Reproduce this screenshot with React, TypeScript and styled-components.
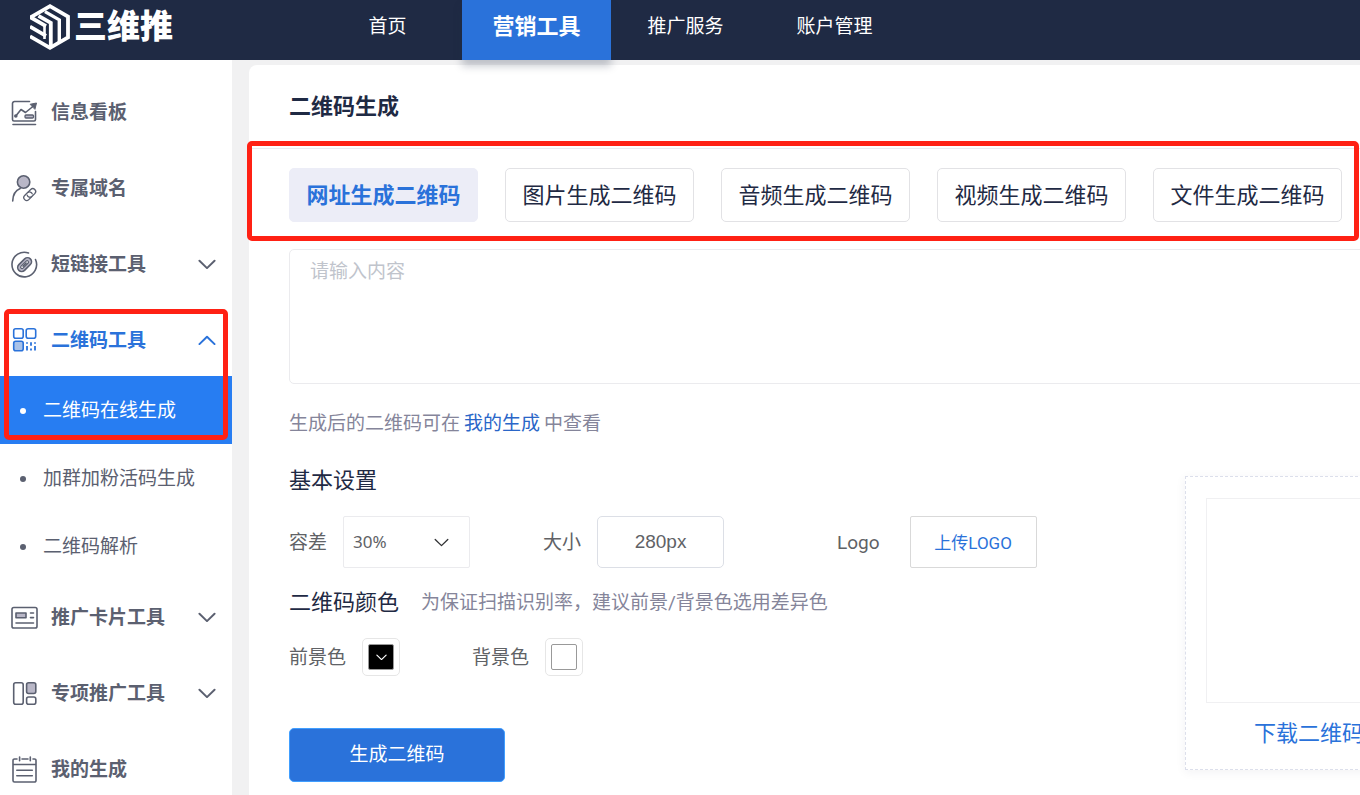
import React, { useState } from "react";
import styled, { createGlobalStyle, css } from "styled-components";

const GlobalStyle = createGlobalStyle`
  *, *::before, *::after { box-sizing: border-box; }
  html { scrollbar-width: none; overflow-x: hidden; }
  body {
    margin: 0;
    background: #f1f1f2;
    color: #1f2a44;
    font-family: Roboto, "Noto Sans CJK SC", sans-serif;
    font-size: 19px;
    line-height: 24px;
  }
  button, input, select, textarea { font: inherit; color: inherit; margin: 0; }
  button { cursor: pointer; }
  a { text-decoration: none; }
`;

/* ---------- header ---------- */

const Header = styled.header`
  display: flex;
  height: 60px;
  padding-left: 30px;
  background: #1f2a44;
  color: #fff;
`;

const Brand = styled.a`
  display: flex;
  align-items: center;
  gap: 4px;
  width: 283px;
  height: 54px;
  color: #fff;
  font-size: 33px;
  font-weight: 900;
  line-height: 40px;
`;

const Nav = styled.nav`
  display: flex;
`;

const NavLink = styled.a<{ $active?: boolean }>`
  width: 149px;
  height: 60px;
  line-height: 54px;
  text-align: center;
  color: #fff;
  ${(p) =>
    p.$active &&
    css`
      position: relative;
      background: #2a72da;
      font-size: 22px;
      font-weight: 700;
      box-shadow: 0 6px 8px rgba(31, 42, 68, 0.25);
    `}
`;

/* ---------- sidebar ---------- */

const Layout = styled.div`
  display: flex;
  align-items: stretch;
`;

const Sidebar = styled.aside`
  flex: none;
  width: 232px;
  padding-top: 14px;
  background: #fff;
`;

const Group = styled.div`
  position: relative;
`;

const MenuButton = styled.button<{ $active?: boolean }>`
  display: flex;
  align-items: center;
  gap: 13px;
  width: 100%;
  height: 76px;
  padding: 0 16px 0 11px;
  border: 0;
  background: none;
  text-align: left;
  font-weight: 700;
  color: ${(p) => (p.$active ? "#2a72da" : "#5b6070")};
`;

const MenuText = styled.span`
  flex: 1;
  padding-top: 2px;
`;

const SubMenu = styled.ul`
  margin: -2px 0 -1px;
  padding: 0;
  list-style: none;
`;

const SubLink = styled.a<{ $active?: boolean }>`
  display: flex;
  align-items: center;
  gap: 17px;
  height: 68px;
  padding: 2px 0 0 20px;
  color: ${(p) => (p.$active ? "#fff" : "#5b6070")};
  background: ${(p) => (p.$active ? "#277df2" : "transparent")};

  &::before {
    content: "";
    width: 6px;
    height: 6px;
    border-radius: 50%;
    background: currentColor;
  }
`;

const Highlight = styled.div`
  position: absolute;
  border: 5px solid #ff2114;
  border-radius: 5px;
  pointer-events: none;
`;

const MenuHighlight = styled(Highlight)`
  top: 7px;
  left: 4px;
  right: 4px;
  height: 131px;
`;

const TabsHighlight = styled(Highlight)`
  top: -27px;
  right: -17px;
  bottom: -19px;
  left: -42px;
`;

/* ---------- content ---------- */

const Card = styled.main`
  flex: 1 0 auto;
  min-width: 1224px;
  margin: 5px 0 0 17px;
  padding-bottom: 40px;
  border-radius: 8px 0 0 0;
  background: #fff;
`;

const CardHeader = styled.div`
  padding: 27px 40px 26px;
  border-bottom: 1px solid #ebebee;
`;

const CardTitle = styled.h1`
  margin: 0;
  font-size: 22px;
  line-height: 30px;
  font-weight: 700;
`;

const CardBody = styled.div`
  padding: 19px 40px 0;
`;

const Tabs = styled.div`
  position: relative;
  display: flex;
  gap: 27px;
  width: fit-content;
`;

const Tab = styled.button<{ $active?: boolean }>`
  width: 189px;
  height: 54px;
  padding: 2px 0 0;
  border: 1px solid ${(p) => (p.$active ? "#ecedf7" : "#e2e2e5")};
  border-radius: 5px;
  background: ${(p) => (p.$active ? "#ecedf7" : "#fff")};
  color: ${(p) => (p.$active ? "#2a72da" : "#1f2a44")};
  font-size: 22px;
  font-weight: ${(p) => (p.$active ? 700 : 400)};
`;

const Content = styled.textarea`
  display: block;
  width: 100%;
  height: 135px;
  margin-top: 27px;
  padding: 10px 20px;
  border: 1px solid #ebebee;
  border-radius: 5px;
  resize: none;
  background: #fff;
  &::placeholder {
    color: #c0c4cc;
    opacity: 1;
  }
`;

const Hint = styled.p`
  margin: 28px 0 30px;
  color: #85859a;
  a {
    margin: 0 4px;
    color: #2a66c8;
  }
`;

const Columns = styled.div`
  display: flex;
  justify-content: space-between;
  align-items: flex-start;
`;

const SectionTitle = styled.h2`
  margin: 0;
  font-size: 22px;
  line-height: 30px;
  font-weight: 400;
`;

const ColorHeading = styled.div`
  display: flex;
  align-items: center;
  gap: 22px;
  margin-top: 20px;
  color: #85859a;
  h2 { color: #1f2a44; }
`;

const Fields = styled.div<{ $gap: number }>`
  display: flex;
  gap: ${(p) => p.$gap}px;
  margin-top: 20px;
`;

const Field = styled.div<{ $gap?: number }>`
  display: flex;
  align-items: center;
  gap: ${(p) => p.$gap ?? 16}px;
  color: #606266;
  label { padding-top: 2px; }
`;

const UploadField = styled(Field)`
  margin-left: 40px;
`;

const SelectBox = styled.div`
  position: relative;
  display: flex;
  align-items: center;
  svg {
    position: absolute;
    right: 21px;
    color: #303133;
    pointer-events: none;
  }
`;

const Select = styled.select`
  appearance: none;
  width: 127px;
  height: 52px;
  padding: 0 9px;
  border: 1px solid #ebebee;
  border-radius: 2px;
  background: #fff;
  font-family: "Noto Sans", sans-serif;
  font-size: 17px;
`;

const SizeInput = styled.input`
  width: 127px;
  height: 52px;
  padding: 0;
  border: 1px solid #dcdfe6;
  border-radius: 5px;
  background: #fff;
  font-family: "Liberation Sans", sans-serif;
  text-align: center;
`;

const UploadButton = styled.button`
  width: 127px;
  height: 52px;
  padding: 2px 0 0;
  border: 1px solid #d9d9d9;
  border-radius: 2px;
  background: #fff;
  color: #2a72da;
  font-size: 17px;
`;

const Swatch = styled.button`
  display: grid;
  place-items: center;
  width: 38px;
  height: 38px;
  padding: 0;
  border: 1px solid #e6e6e6;
  border-radius: 5px;
  background: #fff;
`;

const SwatchColor = styled.span<{ $color: string }>`
  display: grid;
  place-items: center;
  width: 26px;
  height: 26px;
  border: 1px solid #999;
  border-radius: 2px;
  background: ${(p) => p.$color};
  color: #fff;
`;

const Submit = styled.button`
  width: 216px;
  height: 54px;
  margin-top: 52px;
  padding: 0;
  border: 1px solid #409eff;
  border-radius: 5px;
  background: #2a72da;
  color: #fff;
`;

const Preview = styled.div`
  width: 248px;
  margin-top: 10px;
  padding: 21px 20px 20px;
  border: 1px dashed #dcdfeb;
  box-shadow: 0 2px 10px rgba(31, 42, 68, 0.06);
  text-align: center;
`;

const PreviewFrame = styled.div`
  height: 205px;
  margin-bottom: 16px;
  border: 1px solid #f0f0f2;
`;

const Download = styled.a`
  color: #2a72da;
  font-size: 22px;
  line-height: 30px;
`;

/* ---------- drawings ---------- */

const LogoMark = () => (
  <svg width="40" height="46" viewBox="0 0 40 46" fill="none" stroke="#fff" strokeWidth="3.8" aria-hidden="true">
    <path d="M0 13.700 20 2.200 38 12.600V33.400L20 43.800 0 32.300" />
    <path d="M0 13 16 22.200M0 22.600 16 31.800" />
    <path d="M8.500 11.800 20.800 18.900V43" />
    <path d="M15 7.600 29.300 15.900V38" strokeWidth="3.400" />
    <path d="M14.500 22V35" strokeWidth="2.600" />
  </svg>
);

const Chevron = ({ up, width = 18, stroke = 2 }: { up?: boolean; width?: number; stroke?: number }) => (
  <svg
    width={width}
    height={width * 0.6}
    viewBox="0 0 18 11"
    fill="none"
    stroke="currentColor"
    strokeWidth={stroke}
    strokeLinecap="round"
    strokeLinejoin="round"
    aria-hidden="true"
  >
    <path d={up ? "M1.3 9.3 9 1.8l7.7 7.5" : "M1.3 1.8 9 9.3l7.7-7.5"} />
  </svg>
);

const SvgIcon = styled.svg.attrs({ width: 27, height: 27, viewBox: "0 0 27 27" })`
  flex: none;
  fill: none;
  stroke: currentColor;
  stroke-width: 1.6;
  stroke-linecap: round;
  stroke-linejoin: round;
`;

const tint = "#b9b7c7";

const icons: Record<string, React.ReactNode> = {
  board: (
    <SvgIcon>
      <path d="M18.5 2.500H3.500a2 2 0 0 0-2 2V20.500a1.500 1.500 0 0 0 1.500 1.500h20a1.500 1.500 0 0 0 1.500-1.500v-8" />
      <path d="m4.800 17 5.200-6.500 4.500 3L22.500 7" />
      <circle cx="4.800" cy="17" r="1" fill="currentColor" />
      <path d="m19.500 5.200 6-1.200-1.500 6Z" fill="currentColor" strokeWidth="1" />
      <rect x="14" y="16" width="8.500" height="3" rx="1" fill={tint} strokeWidth="1.300" />
      <path d="M2 25.500h22.500" />
    </SvgIcon>
  ),
  domain: (
    <SvgIcon>
      <circle cx="12.600" cy="7" r="6.200" fill={tint} />
      <path d="M1.700 26c.2-6 2.300-10.500 7.500-12.500" />
      <g transform="rotate(-45 18.700 19.600)" strokeWidth="1.300">
        <path d="M18.500 22.500h-4a2.900 2.900 0 0 1 0-5.800h4.200a2.900 2.900 0 0 1 2.300 4.200" />
        <path d="M19 16.700h4a2.900 2.900 0 0 1 0 5.800h-4.200a2.900 2.900 0 0 1-2.300-4.200" />
      </g>
    </SvgIcon>
  ),
  link: (
    <SvgIcon>
      <path d="M17.500 2A12.300 12.300 0 1 0 24.500 8.500" />
      <g transform="rotate(-45 13.600 13.600)">
        <rect x="5.500" y="9.600" width="16.200" height="8" rx="4" fill={tint} />
        <rect x="8.600" y="12.200" width="10" height="2.800" rx="1.400" fill="#fff" strokeWidth="1.200" />
        <path d="M11.500 13.600h4.200" />
      </g>
    </SvgIcon>
  ),
  qr: (
    <SvgIcon>
      <rect x="2.700" y="1.800" width="9.500" height="9.500" rx="2" />
      <rect x="15.200" y="1.800" width="9.500" height="9.500" rx="2" />
      <rect x="2.700" y="14.300" width="9.500" height="9.500" rx="2" fill="#a9c2e8" />
      <path
        d="M16 15.300v1.400M16 19v4.400M20 15.300v3.400M20 21.500v1.900M24 15.300v1.400M24 19v4.400"
        strokeLinecap="butt"
        strokeWidth="1.800"
      />
    </SvgIcon>
  ),
  card: (
    <SvgIcon>
      <rect x="1" y="3.500" width="25" height="20.500" rx="1.800" />
      <rect x="5" y="9" width="10" height="4.800" fill={tint} />
      <path d="M19.500 9h3M19.500 13.600h3M5 19h17.500" />
    </SvgIcon>
  ),
  promo: (
    <SvgIcon>
      <rect x="2.700" y="2.800" width="9.500" height="21.500" rx="2" />
      <rect x="15.600" y="2.800" width="9.200" height="10.700" rx="2" fill={tint} />
      <rect x="15.600" y="17" width="9.200" height="7.300" rx="2" />
    </SvgIcon>
  ),
  mine: (
    <SvgIcon>
      <path d="M6 3H3.500A1.500 1.500 0 0 0 2 4.500v20A1.500 1.500 0 0 0 3.500 26h20a1.500 1.500 0 0 0 1.500-1.500v-20A1.500 1.500 0 0 0 23.500 3H22M11 3h6M2 8.500h23" />
      <path d="M8.600 1v3.700M19.300 1v3.700M5.800 14.200h15.500M5.800 19.800h15.500" />
    </SvgIcon>
  ),
};

/* ---------- page ---------- */

const MenuItem = ({ icon, label, open, expandable }: { icon: string; label: string; open?: boolean; expandable?: boolean }) => (
  <MenuButton type="button" $active={open} aria-expanded={expandable ? !!open : undefined}>
    {icons[icon]}
    <MenuText>{label}</MenuText>
    {expandable && <Chevron up={open} />}
  </MenuButton>
);

const tabNames = ["网址生成二维码", "图片生成二维码", "音频生成二维码", "视频生成二维码", "文件生成二维码"];

export default function App() {
  const [tab, setTab] = useState(0);

  return (
    <>
      <GlobalStyle />
      <Header>
        <Brand href="#">
          <LogoMark />
          三维推
        </Brand>
        <Nav>
          <NavLink href="#">首页</NavLink>
          <NavLink href="#" $active>营销工具</NavLink>
          <NavLink href="#">推广服务</NavLink>
          <NavLink href="#">账户管理</NavLink>
        </Nav>
      </Header>
      <Layout>
        <Sidebar>
          <MenuItem icon="board" label="信息看板" />
          <MenuItem icon="domain" label="专属域名" />
          <MenuItem icon="link" label="短链接工具" expandable />
          <Group>
            <MenuItem icon="qr" label="二维码工具" expandable open />
            <SubMenu>
              <li><SubLink href="#" $active>二维码在线生成</SubLink></li>
              <li><SubLink href="#">加群加粉活码生成</SubLink></li>
              <li><SubLink href="#">二维码解析</SubLink></li>
            </SubMenu>
            <MenuHighlight />
          </Group>
          <MenuItem icon="card" label="推广卡片工具" expandable />
          <MenuItem icon="promo" label="专项推广工具" expandable />
          <MenuItem icon="mine" label="我的生成" />
        </Sidebar>
        <Card>
          <CardHeader>
            <CardTitle>二维码生成</CardTitle>
          </CardHeader>
          <CardBody>
            <Tabs>
              {tabNames.map((name, i) => (
                <Tab key={name} type="button" $active={i === tab} onClick={() => setTab(i)}>
                  {name}
                </Tab>
              ))}
              <TabsHighlight />
            </Tabs>
            <Content placeholder="请输入内容" aria-label="内容" />
            <Hint>
              生成后的二维码可在<a href="#">我的生成</a>中查看
            </Hint>
            <Columns>
              <div>
                <SectionTitle>基本设置</SectionTitle>
                <Fields $gap={73}>
                  <Field>
                    <label htmlFor="level">容差</label>
                    <SelectBox>
                      <Select id="level" defaultValue="30%">
                        <option>7%</option>
                        <option>15%</option>
                        <option>25%</option>
                        <option>30%</option>
                      </Select>
                      <Chevron width={15} stroke={1.6} />
                    </SelectBox>
                  </Field>
                  <Field>
                    <label htmlFor="size">大小</label>
                    <SizeInput id="size" defaultValue="280px" />
                  </Field>
                  <UploadField $gap={30}>
                    <label htmlFor="logo">Logo</label>
                    <UploadButton id="logo" type="button">上传LOGO</UploadButton>
                  </UploadField>
                </Fields>
                <ColorHeading>
                  <SectionTitle>二维码颜色</SectionTitle>
                  <span>为保证扫描识别率，建议前景/背景色选用差异色</span>
                </ColorHeading>
                <Fields $gap={72}>
                  <Field>
                    <label htmlFor="fore">前景色</label>
                    <Swatch id="fore" type="button">
                      <SwatchColor $color="#000">
                        <Chevron width={11} stroke={2} />
                      </SwatchColor>
                    </Swatch>
                  </Field>
                  <Field>
                    <label htmlFor="back">背景色</label>
                    <Swatch id="back" type="button">
                      <SwatchColor $color="#fff" />
                    </Swatch>
                  </Field>
                </Fields>
                <Submit type="button">生成二维码</Submit>
              </div>
              <Preview>
                <PreviewFrame />
                <Download href="#">下载二维码</Download>
              </Preview>
            </Columns>
          </CardBody>
        </Card>
      </Layout>
    </>
  );
}
